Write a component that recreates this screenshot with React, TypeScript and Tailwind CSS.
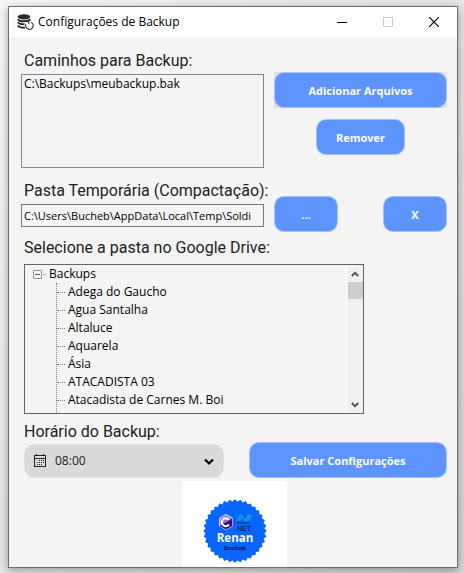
import { useState } from "react";
import type { ReactNode } from "react";

const folders = [
  "Adega do Gaucho",
  "Agua Santalha",
  "Altaluce",
  "Aquarela",
  "Ásia",
  "ATACADISTA 03",
  "Atacadista de Carnes M. Boi",
];

const uiFont = "font-['Open_Sans','Noto_Sans',sans-serif]";
const labelStyle =
  "block h-6 whitespace-nowrap font-[Roboto,sans-serif] text-base leading-6 text-[#222]";

function ActionButton({ className = "", children, ...rest }: { className?: string; children: ReactNode; "aria-label"?: string }) {
  return (
    <button
      type="button"
      className={`h-9 rounded-[10px] border border-[#a3c2fb] bg-[#5e94ff] pt-0.5 text-[11px] font-bold text-white ${className}`}
      {...rest}
    >
      {children}
    </button>
  );
}

function DatabaseIcon() {
  return (
    <svg width="17" height="17" viewBox="0 0 17 17" className="shrink-0" aria-hidden="true">
      <ellipse cx="7" cy="2.8" rx="6.3" ry="2.6" fill="#2b2b2b" />
      <g fill="none" stroke="#2b2b2b" strokeWidth="1.9">
        <path d="M.8 5.2C2 7 5 7.4 7.5 7.3 10 7.2 12.500 6.500 13.200 5" />
        <path d="M.8 8.300C2 10 4.500 10.400 7.800 10.400" />
        <path d="M.8 11.500C2 13.200 4.500 13.800 8 13.800" />
      </g>
      <circle cx="12" cy="11.500" r="4.600" fill="#fff" />
      <path d="M14 8.300a3.700 3.700 0 1 1-5 1.900M8.800 7.600l2.700-.4.500 2.900" fill="none" stroke="#333" strokeWidth="1.100" />
    </svg>
  );
}

function TitleBar() {
  return (
    <header className="flex h-[30px] items-center bg-white pl-2 text-black">
      <DatabaseIcon />
      <h1 className="ml-1 flex-1 whitespace-nowrap text-xs">Configurações de Backup</h1>
      <button type="button" aria-label="Minimizar" className="grid h-full w-[46px] place-items-center">
        <svg width="10" height="10" shapeRendering="crispEdges"><path d="M0 5h10v1H0z" fill="#000" /></svg>
      </button>
      <button type="button" aria-label="Maximizar" disabled className="grid h-full w-[46px] place-items-center">
        <svg width="10" height="10" shapeRendering="crispEdges"><path d="M.5.500h9v9h-9z" stroke="#ccc" fill="none" /></svg>
      </button>
      <button type="button" aria-label="Fechar" className="grid h-full w-[46px] place-items-center">
        <svg width="10" height="10"><path d="M0 0l10 10M10 0L0 10" stroke="#000" strokeWidth="1.200" /></svg>
      </button>
    </header>
  );
}

function FolderTree() {
  const [open, setOpen] = useState(true);
  return (
    <div className="flex h-[150px] w-[340px] border border-[#646464] text-xs text-black">
      <ul role="tree" aria-labelledby="drive-label" className="min-w-0 flex-1 overflow-hidden pl-2">
        <li role="treeitem" aria-expanded={open} aria-selected={false}>
          <div className="flex h-[18px] items-center">
            <button
              type="button"
              aria-label="Expandir ou recolher Backups"
              onClick={() => setOpen(!open)}
              className="grid size-[9px] place-items-center rounded-[1px] border border-[#919191] bg-[#f8f8f8]"
            >
              <span className="h-px w-[5px] bg-[#3b52a0]" />
            </button>
            <span className="ml-px w-[3px] border-t border-dotted border-[#808080]" />
            <span className="ml-[3px]">Backups</span>
          </div>
          {open && (
            <ul role="group" className="ml-[23px] border-l border-dotted border-[#808080] pb-1">
              {folders.map((name) => (
                <li key={name} role="treeitem" aria-selected={false} className="flex h-[18px] items-center whitespace-nowrap">
                  <span className="mr-[3px] w-2 border-t border-dotted border-[#808080]" />
                  {name}
                </li>
              ))}
            </ul>
          )}
        </li>
      </ul>
      <div className="flex w-[17px] flex-col items-center border-l border-white bg-[#f0f0f0]">
        <button type="button" aria-label="Rolar para cima" className="grid h-[17px] w-full place-items-center">
          <svg width="8" height="6"><path d="M.8 5L4 1.800 7.200 5" fill="none" stroke="#555" strokeWidth="2" /></svg>
        </button>
        <div className="h-[17px] w-[15px] bg-[#cdcdcd]" />
        <div className="flex-1" />
        <button type="button" aria-label="Rolar para baixo" className="grid h-[17px] w-full place-items-center">
          <svg width="8" height="6"><path d="M.8 1L4 4.200 7.200 1" fill="none" stroke="#555" strokeWidth="2" /></svg>
        </button>
      </div>
    </div>
  );
}

function TimeSelect() {
  return (
    <div className="relative ml-[3px] w-[200px]">
      <select
        id="time"
        defaultValue="08:00"
        className="block h-[34px] w-full appearance-none rounded-[10px] border border-[#e2e2e2] bg-[#d9d9d9] pl-[30px] text-xs text-[#222]"
      >
        <option>08:00</option>
        <option>12:00</option>
        <option>18:00</option>
      </select>
      <svg className="pointer-events-none absolute top-2.5 left-2.5" width="12" height="13" shapeRendering="crispEdges" aria-hidden="true">
        <path d="M.5 1.500h11v11H.5zM1 4.500h10M2.500 0v2M9.500 0v2" fill="none" stroke="#222" />
        <path d="M5 6.500h5M3 8.500h7M3 10.500h5" stroke="#222" strokeDasharray="1 1" />
      </svg>
      <svg className="pointer-events-none absolute top-3.5 right-2.5" width="10" height="8" aria-hidden="true">
        <path d="M1 1.500l4 4 4-4" fill="none" stroke="#000" strokeWidth="2.200" />
      </svg>
    </div>
  );
}

const sealPoints = Array.from({ length: 72 }, (_, i) => {
  const r = i % 2 ? 29.600 : 31.800;
  const a = (i * Math.PI) / 36;
  return `${32 + r * Math.sin(a)},${32 - r * Math.cos(a)}`;
}).join(" ");

function Seal() {
  return (
    <svg width="64" height="64" viewBox="0 0 64 64" role="img" aria-label="Renan Bucheb, C# e .NET">
      <polygon points={sealPoints} fill="#0866ff" />
      <path d="M23 15.500l6.500 3.700v7.700L23 30.700l-6.500-3.800v-7.700z" fill="#9a6fd6" stroke="#fff" strokeWidth=".8" />
      <path d="M29.300 19.500v7.400L23 30.500l-6.300-3.600z" fill="#35127f" />
      <path d="M26 20.800a4 4 0 1 0 0 4.700" fill="none" stroke="#fff" strokeWidth="2" />
      <path d="M33.500 22c2.500-1 2.500-6 4.500-6 2 0 2 5.500 4 5.500s2-5.500 3.500-5.500M36 22c2-2 2-4.500 3.200-5M41.500 21.800c3.500 0 2.500-5.500 6.500-5.500-1 2-1.500 5.500-4 5.500" fill="none" stroke="#16a3d8" strokeWidth="1.300" />
      <g fontFamily="Liberation Sans, sans-serif" fill="#071533">
        <text x="34" y="25" fontSize="3">Microsoft</text>
        <text x="32" y="32" fontSize="7">.NET</text>
      </g>
      <text x="32" y="42.500" textAnchor="middle" fontSize="11.500" fontWeight="700" fill="#fff">Renan</text>
      <text x="32" y="51" textAnchor="middle" fontSize="6" fontWeight="700" fill="#071533">Bucheb</text>
    </svg>
  );
}

export default function App() {
  const [path, setPath] = useState("C:\\Users\\Bucheb\\AppData\\Local\\Temp\\Soldi");
  return (
    <div className={`min-h-screen bg-linear-to-br from-[#f6f6f6] to-[#d4d4d4] pt-1.5 pr-1.5 pb-[5px] pl-2 ${uiFont}`}>
      <main className="border border-[#6e6e6e] bg-[#f4f4f4] shadow-[0_2px_8px_rgba(0,0,0,0.35)]">
        <TitleBar />
        <div className="pt-3 pr-2.5 pl-3">
          <div className="grid grid-cols-[minmax(0,1fr)_173px] gap-x-2.5">
            <div>
              <label htmlFor="paths" className={`${labelStyle} pl-[3px]`}>Caminhos para Backup:</label>
              <select
                id="paths"
                multiple
                className="mt-px block h-[94px] w-full appearance-none overflow-hidden border border-[#828790] px-0.5 text-xs text-black"
              >
                <option className="min-h-0 p-0">C:\Backups\meubackup.bak</option>
              </select>
              <label htmlFor="temp" className={`${labelStyle} mt-[11px] pl-[3px]`}>Pasta Temporária (Compactação):</label>
              <input
                id="temp"
                value={path}
                onChange={(e) => setPath(e.target.value)}
                className="mt-px block h-[23px] w-full border border-[#7a7a7a] px-0.5 text-[11px] text-black"
              />
            </div>
            <div className="flex flex-col pt-[23px]">
              <div className="flex bg-[#e0e0e0]">
                <ActionButton className="flex-1">Adicionar Arquivos</ActionButton>
              </div>
              <ActionButton className="mt-[11px] w-[89px] self-center">Remover</ActionButton>
              <div className="mt-[41px] flex justify-between">
                <ActionButton className="w-16" aria-label="Procurar pasta">...</ActionButton>
                <ActionButton className="w-16" aria-label="Limpar pasta">X</ActionButton>
              </div>
            </div>
          </div>
          <div className="mt-1 pl-[3px]">
            <h2 id="drive-label" className={`${labelStyle} mb-1`}>Selecione a pasta no Google Drive:</h2>
            <FolderTree />
          </div>
          <div className="mt-1.5 flex items-end justify-between">
            <div>
              <label htmlFor="time" className={`${labelStyle} pl-[3px]`}>Horário do Backup:</label>
              <TimeSelect />
            </div>
            <ActionButton className="w-[198px]">Salvar Configurações</ActionButton>
          </div>
          <div className="mt-[3px] ml-[161px] flex h-[86px] w-[105px] items-end justify-center bg-white pb-1">
            <Seal />
          </div>
        </div>
      </main>
    </div>
  );
}
